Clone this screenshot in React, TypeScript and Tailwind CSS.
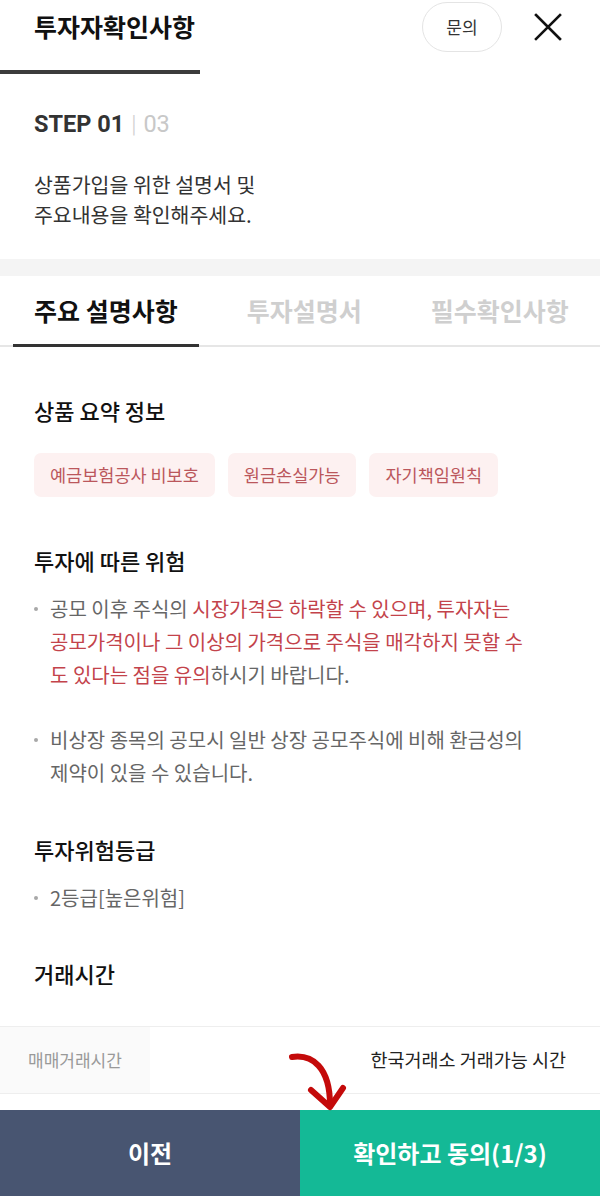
import React from "react";

const tags = ["예금보험공사 비보호", "원금손실가능", "자기책임원칙"];

function Bullet({ children }: { children: React.ReactNode }) {
  return (
    <div className="flex">
      <div className="w-[16px] shrink-0 pt-[15px]">
        <div className="w-[4px] h-[4px] rounded-full bg-[#a8a8a8]" />
      </div>
      <p className="text-[20px] leading-[33px] text-[#666] break-keep">{children}</p>
    </div>
  );
}

function SectionTitle({ children, className = "" }: { children: React.ReactNode; className?: string }) {
  return (
    <h3 className={`text-[22px] leading-[28px] font-medium text-[#111] ${className}`}>{children}</h3>
  );
}

export default function App() {
  return (
    <div
      className="relative w-[600px] h-[1196px] flex flex-col bg-white overflow-hidden"
      style={{ fontFamily: "'Noto Sans CJK KR', 'Noto Sans', sans-serif" }}
    >
      {/* header */}
      <div className="h-[70px] flex items-start justify-between pl-[34px] pr-[38px] pt-[2px]">
        <h1 className="h-[50px] flex items-center text-[25px] font-bold text-[#111]">투자자확인사항</h1>
        <div className="flex items-center h-[50px]">
          <button className="w-[80px] h-[50px] rounded-full border border-[#e4e4e4] text-[17px] text-[#333]">
            문의
          </button>
          <svg className="ml-[32px]" width="28" height="28" viewBox="0 0 28 28">
            <path d="M2 2L26 26M26 2L2 26" stroke="#111" strokeWidth="2.6" strokeLinecap="square" />
          </svg>
        </div>
      </div>
      <div className="w-[200px] h-[4px] bg-[#3c3c3c]" />

      {/* step */}
      <div className="px-[34px] pt-[36px] pb-[30px]">
        <div className="h-[30px] flex items-center text-[23.5px]" style={{ fontFamily: "Roboto, sans-serif" }}>
          <span className="font-bold text-[#333]">STEP 01</span>
          <span className="mx-[7px] text-[#d0d0d0] font-light">|</span>
          <span className="text-[#c8c8c8]">03</span>
        </div>
        <p className="mt-[29px] text-[20.5px] leading-[30px] text-[#333]">
          상품가입을 위한 설명서 및
          <br />
          주요내용을 확인해주세요.
        </p>
      </div>
      <div className="h-[17px] bg-[#f4f4f4]" />

      {/* tabs */}
      <div className="flex gap-[27px] pl-[13px] border-b-2 border-[#e6e6e6] whitespace-nowrap">
        <button className="relative h-[69px] px-[21px] text-[25px] font-bold text-[#111]">
          주요 설명사항
          <span className="absolute left-0 right-0 bottom-[-2px] h-[3px] bg-[#333]" />
        </button>
        <button className="h-[69px] px-[21px] text-[25px] font-bold text-[#cfcfcf]">투자설명서</button>
        <button className="h-[69px] px-[21px] text-[25px] font-bold text-[#cfcfcf]">필수확인사항</button>
      </div>

      {/* body */}
      <div className="flex-1 overflow-hidden">
        <div className="px-[34px]">
          <SectionTitle className="mt-[49px]">상품 요약 정보</SectionTitle>
          <div className="mt-[29px] flex gap-[13px]">
            {tags.map((t) => (
              <span
                key={t}
                className="h-[44px] px-[16px] flex items-center rounded-[7px] bg-[#fdf1f1] text-[17.5px] text-[#bb575c]"
              >
                {t}
              </span>
            ))}
          </div>

          <SectionTitle className="mt-[49px]">투자에 따른 위험</SectionTitle>
          <div className="mt-[18px] pr-[30px]">
            <Bullet>
              공모 이후 주식의{" "}
              <span className="text-[#c3434b]">
                시장가격은 하락할 수 있으며, 투자자는 공모가격이나 그 이상의 가격으로 주식을 매각하지 못할 수 도 있다는 점을
                유의
              </span>
              하시기 바랍니다.
            </Bullet>
          </div>
          <div className="mt-[32px] pr-[30px]">
            <Bullet>비상장 종목의 공모시 일반 상장 공모주식에 비해 환금성의 제약이 있을 수 있습니다.</Bullet>
          </div>

          <SectionTitle className="mt-[46px]">투자위험등급</SectionTitle>
          <div className="mt-[18px]">
            <Bullet>2등급[높은위험]</Bullet>
          </div>

          <SectionTitle className="mt-[45px]">거래시간</SectionTitle>
        </div>

        {/* trading hours table */}
        <div className="mt-[39px] border-t border-[#eeeeee]">
          <div className="h-[67px] flex border-b border-[#eeeeee]">
            <div className="w-[150px] bg-[#fafafa] pl-[28px] flex items-center text-[17px] text-[#999]">
              매매거래시간
            </div>
            <div className="flex-1 flex items-center justify-end pr-[34px] text-[18.5px] text-[#222]">
              한국거래소 거래가능 시간
            </div>
          </div>
        </div>
      </div>

      {/* bottom buttons */}
      <div className="h-[86px] flex">
        <button className="flex-1 bg-[#485571] text-white text-[24px] font-bold">이전</button>
        <button className="flex-1 bg-[#14b996] text-white text-[24px] font-bold">확인하고 동의(1/3)</button>
      </div>

      {/* hand-drawn pointer arrow */}
      <svg className="absolute left-[280px] top-[1045px]" width="75" height="70" viewBox="0 0 75 70" fill="none">
        <path d="M12 12C32 9 50 22 50 60" stroke="#c40a0a" strokeWidth="6" strokeLinecap="round" />
        <path d="M31 45L50 62L63 43" stroke="#c40a0a" strokeWidth="6" strokeLinecap="round" strokeLinejoin="round" />
      </svg>
    </div>
  );
}
